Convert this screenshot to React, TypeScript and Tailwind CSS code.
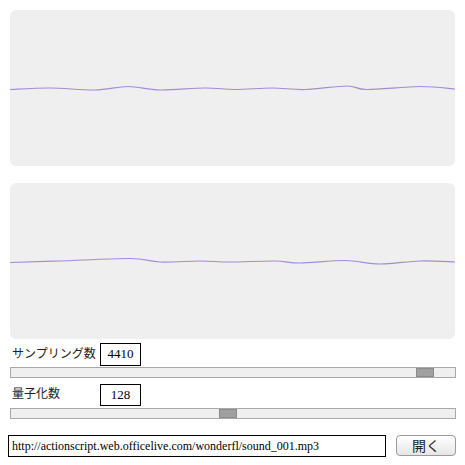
import React from 'react';

const serif = { fontFamily: '"Liberation Serif", "Noto Sans CJK JP", serif' };
const jp = { fontFamily: '"Noto Sans CJK JP", sans-serif' };

type Pt = [number, number];

// smooth curve through the points (catmull-rom -> bezier)
function smooth(pts: Pt[]) {
  let d = `M${pts[0][0]} ${pts[0][1]}`;
  for (let i = 0; i < pts.length - 1; i++) {
    const p0 = pts[i - 1] || pts[i];
    const p1 = pts[i];
    const p2 = pts[i + 1];
    const p3 = pts[i + 2] || p2;
    const c1x = p1[0] + (p2[0] - p0[0]) / 6;
    const c1y = p1[1] + (p2[1] - p0[1]) / 6;
    const c2x = p2[0] - (p3[0] - p1[0]) / 6;
    const c2y = p2[1] - (p3[1] - p1[1]) / 6;
    d += ` C${c1x} ${c1y}, ${c2x} ${c2y}, ${p2[0]} ${p2[1]}`;
  }
  return d;
}

const wave1: Pt[] = [
  [0, 79.5], [40, 78], [85, 80], [118, 76.5], [150, 80], [195, 78],
  [225, 79.5], [262, 78], [295, 79.5], [337, 76], [357, 79.5], [410, 76.5], [445, 79],
];
const wave2: Pt[] = [
  [0, 79.5], [50, 78], [120, 75.5], [150, 79], [190, 78], [220, 79],
  [265, 78], [290, 80], [335, 77.5], [370, 81], [410, 78], [445, 79],
];

function Panel({ pts }: { pts: Pt[] }) {
  return (
    <div className="w-[445px] h-[156px] ml-[10px] rounded-[6px] bg-[#efefef]">
      <svg width="445" height="156" viewBox="0 0 445 156">
        <path d={smooth(pts)} fill="none" stroke="#a58ad9" strokeWidth="1.2" />
      </svg>
    </div>
  );
}

function Slider({ pos }: { pos: number }) {
  return (
    <div className="relative ml-[10px] w-[446px] h-[11px] border border-[#a8a8a8] bg-[#efefef]">
      <div
        className="absolute top-0 h-[9px] w-[18px] bg-[#a0a0a0] border border-[#8c8c8c]"
        style={{ left: pos }}
      />
    </div>
  );
}

export default function App() {
  return (
    <div className="w-[465px] h-[465px] bg-white pt-[10px] overflow-hidden">
      <Panel pts={wave1} />
      <div className="mt-[17px]">
        <Panel pts={wave2} />
      </div>

      <div className="flex items-start mt-[4px] h-[23px]">
        <span className="ml-[12px] w-[88px] pt-[2px] text-[12px] text-[#222] leading-[15px]" style={jp}>
          サンプリング数
        </span>
        <div
          className="w-[41px] h-[23px] border border-black flex items-start justify-center pt-[2px] text-[13px] leading-[15px] text-black"
          style={serif}
        >
          4410
        </div>
      </div>
      <div className="mt-[1px]">
        <Slider pos={405} />
      </div>

      <div className="flex items-start mt-[6px] h-[23px]">
        <span className="ml-[12px] w-[88px] pt-[1px] text-[12px] text-[#222] leading-[15px]" style={jp}>
          量子化数
        </span>
        <div
          className="w-[41px] h-[22px] border border-black flex items-start justify-center pt-[2px] text-[13px] leading-[15px] text-black"
          style={serif}
        >
          128
        </div>
      </div>
      <div className="mt-[1px]">
        <Slider pos={208} />
      </div>

      <div className="flex items-start mt-[16px]">
        <div
          className="ml-[8px] w-[378px] h-[22px] border border-black flex items-center pl-[3px] text-[12px] text-black"
          style={serif}
        >
          http://actionscript.web.officelive.com/wonderfl/sound_001.mp3
        </div>
        <button
          className="ml-[10px] w-[60px] h-[21px] rounded-[4px] border border-[#9a9a9a] bg-gradient-to-b from-white to-[#e6e6e6] flex items-center justify-center text-[14px] text-[#222]"
          style={jp}
        >
          開く
        </button>
      </div>
    </div>
  );
}
